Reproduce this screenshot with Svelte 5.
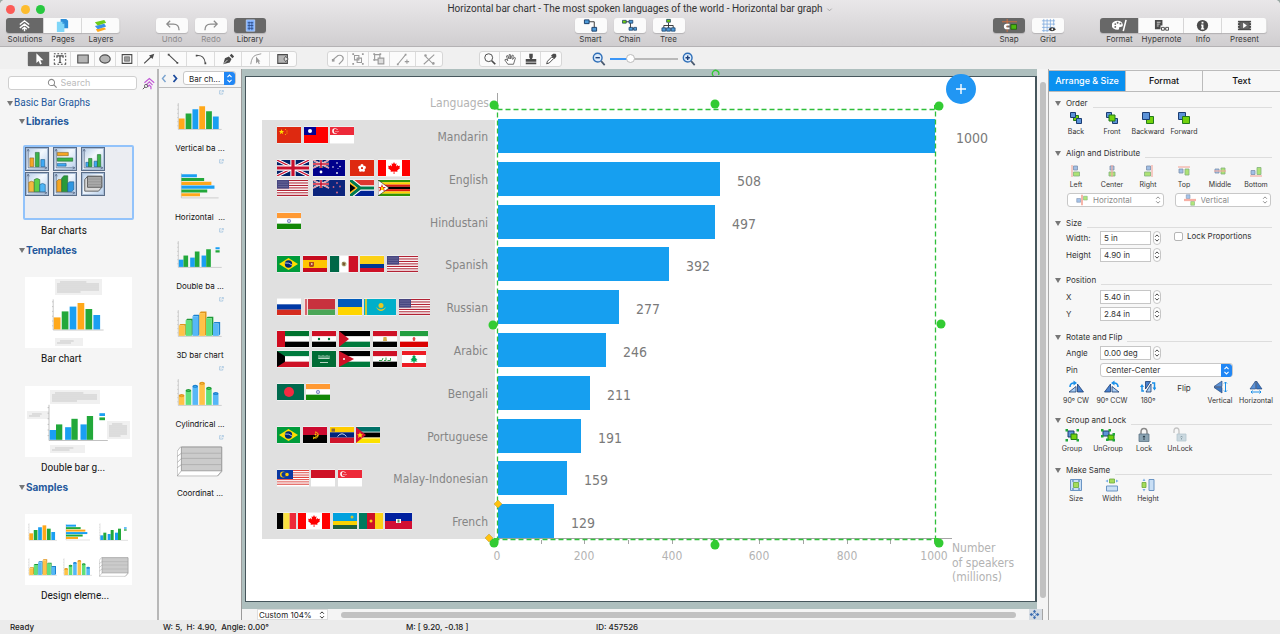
<script lang="ts">
    type Shape = [d: string, fill: string, stroke?: string, width?: number];
    type Chart = Shape[];

    const BLUE = '#1a9ff2';
    const GREEN = '#22a83a';
    const ORANGE = '#ffa81a';

    // chart rows, each flag as [y, code, x]
    const rows = [
        { name: 'Mandarin', value: 1000, flags: [[58, 'cn', 35], [58, 'tw', 62], [58, 'sg', 88]] },
        {
            name: 'English',
            value: 508,
            flags: [
                [91, 'gb', 35], [91, 'au', 71], [91, 'hk', 108], [91, 'ca', 136],
                [111, 'us', 35], [111, 'nz', 71], [111, 'za', 108], [111, 'zw', 136],
            ],
        },
        { name: 'Hindustani', value: 497, flags: [[144, 'in', 35]] },
        { name: 'Spanish', value: 392, flags: [[187, 'br', 35], [187, 'es', 61], [187, 'mx', 88], [187, 'co', 118], [187, 'us', 145]] },
        { name: 'Russian', value: 277, flags: [[230, 'ru', 35], [230, 'by', 62], [230, 'ua', 96], [230, 'kz', 122], [230, 'us', 157]] },
        {
            name: 'Arabic',
            value: 246,
            flags: [
                [262, 'ae', 35], [262, 'sy', 70], [262, 'ps', 97], [262, 'eg', 131], [262, 'ir', 158],
                [282, 'kw', 35], [282, 'sa', 70], [282, 'jo', 97], [282, 'iq', 131], [282, 'lb', 160],
            ],
        },
        { name: 'Bengali', value: 211, flags: [[315, 'bd', 35], [315, 'in', 64]] },
        { name: 'Portuguese', value: 191, flags: [[358, 'br', 35], [358, 'ao', 61], [358, 've', 88], [358, 'mz', 114]] },
        { name: 'Malay-Indonesian', value: 159, flags: [[401, 'my', 35], [401, 'id', 69], [401, 'sg', 96]] },
        { name: 'French', value: 129, flags: [[444, 'be', 35], [444, 'ca', 56], [444, 'rw', 91], [444, 'cm', 117], [444, 'ht', 143]] },
    ] as { name: string; value: number; flags: [number, string, number][] }[];

    // horizontal bands, top to bottom
    function bands(w: number, ...colors: string[]): Shape[] {
        const h = 16 / colors.length;
        return colors.map((c, i) => [`M0 ${i * h}h${w}v${h}h-${w}z`, c]);
    }
    function poles(w: number, ...colors: string[]): Shape[] {
        const s = w / colors.length;
        return colors.map((c, i) => [`M${i * s} 0h${s}v16h-${s}z`, c]);
    }
    function disc(x: number, y: number, r: number): string {
        return `M${x - r} ${y}a${r} ${r} 0 1 0 ${2 * r} 0a${r} ${r} 0 1 0 ${-2 * r} 0z`;
    }
    function union(w: number, h: number): Shape[] {
        return [
            [`M0 0h${w}v${h}h-${w}z`, '#012169'],
            [`M0 0L${w} ${h}M${w} 0L0 ${h}`, 'none', '#fff', h / 5],
            [`M0 0L${w} ${h}M${w} 0L0 ${h}`, 'none', '#c8102e', h / 14],
            [`M${w / 2} 0v${h}M0 ${h / 2}h${w}`, 'none', '#fff', h / 3],
            [`M${w / 2} 0v${h}M0 ${h / 2}h${w}`, 'none', '#c8102e', h / 5],
        ];
    }
    const maple = 'M16 2l1 2 1.5-.7-.4 3.2 1.6-1.500.4 1 2-.2-.8 1.700.9.6-3 2.500.3 1.200-3.100-.4.1 2.600h-.9l.1-2.600-3.100.4.3-1.200-3-2.500.9-.6-.8-1.700 2 .2.4-1 1.600 1.500-.4-3.200 1.400.7z';

    const flags: Record<string, { w: number; art: Shape[] }> = {
        cn: { w: 24, art: [...bands(24, '#de2910'), ['M4.5 2l.7 2h2l-1.600 1.200.6 2-1.700-1.200-1.700 1.200.6-2L1.800 4h2z', '#ffde00'], [disc(8.5, 2.5, 0.6) + disc(10, 4, 0.6) + disc(10, 6, 0.6) + disc(8.5, 7.5, 0.6), '#ffb000']] },
        tw: { w: 24, art: [...bands(24, '#fe0000'), ['M0 0h12v8H0z', '#000095'], [disc(6, 4, 2), '#fff']] },
        sg: { w: 24, art: [...bands(24, '#ed2939', '#fff'), [disc(5, 4, 2.8), '#fff'], [disc(6, 4, 2.3), '#ed2939'], [disc(7, 2.5, 0.5) + disc(6, 4.5, 0.5) + disc(8, 4.5, 0.5), '#fff']] },
        gb: { w: 32, art: union(32, 16) },
        au: { w: 32, art: [...bands(32, '#00008b'), ...union(16, 8), [disc(8, 12, 1.4) + disc(24, 3, 0.8) + disc(20, 7, 0.8) + disc(27, 6.5, 0.8) + disc(24, 13, 0.9) + disc(25, 8.5, 0.5), '#fff']] },
        nz: { w: 32, art: [...bands(32, '#0c247c'), ...union(16, 8), [disc(24, 3, 0.9) + disc(20.5, 7, 0.9) + disc(27, 6.5, 0.9) + disc(24, 12.5, 1.1), '#c76482']] },
        hk: { w: 24, art: [...bands(24, '#de2910'), [disc(12, 5.6, 1.6) + disc(14.3, 7.4, 1.6) + disc(13.4, 10.2, 1.6) + disc(10.6, 10.2, 1.6) + disc(9.7, 7.4, 1.6), '#fff'], [disc(12, 8.2, 0.8), '#de2910']] },
        ca: { w: 32, art: [['M0 0h32v16H0z', '#fff'], ['M0 0h8v16H0zM24 0h8v16h-8z', '#f00'], [maple, '#f00']] },
        us: { w: 31, art: [...bands(31, '#b22234', '#fff', '#b22234', '#fff', '#b22234', '#fff', '#b22234', '#fff', '#b22234', '#fff', '#b22234', '#fff', '#b22234'), ['M0 0h12v8.6H0z', '#474680'], ['M1 2h10M1 4.3h10M1 6.6h10', 'none', '#8886b0', 0.5]] },
        za: { w: 24, art: [...bands(24, '#de3831', '#002395'), ['M0 0L10 8H24M0 16L10 8', 'none', '#fff', 5.4], ['M0 0L10 8H24M0 16L10 8', 'none', '#007a4d', 3.2], ['M0 2l7.5 6L0 14z', '#ffb612'], ['M0 4l5.5 4L0 12z', '#000']] },
        zw: { w: 32, art: [...bands(32, '#319208', '#ffd200', '#de2010', '#000', '#de2010', '#ffd200', '#319208'), ['M0 0l11 8L0 16z', '#fff', '#000', 0.5], ['M4 4l1 3h3l-2 1.5 1 3-3-2-3 2 1-3L0 7h3z', '#de2010'], ['M3 7h2l1 3H3z', '#ffd200']] },
        in: { w: 24, art: [...bands(24, '#ff9933', '#fff', '#138808'), [disc(12, 8, 1.7), '#c8c8ea', '#5560b0', 0.6]] },
        br: { w: 23, art: [...bands(23, '#009b3a'), ['M11.5 2L21 8l-9.5 6L2 8z', '#fedf00'], [disc(11.5, 8, 3.7), '#002776'], ['M8 7q4-.6 7 2', 'none', '#fff', 0.7]] },
        es: { w: 24, art: [['M0 0h24v16H0z', '#c60b1e'], ['M0 4h24v8H0z', '#ffc400'], ['M6 6h5v4l-1 1H7l-1-1z', '#ad4520'], ['M8 7h1.5v2H8z', '#e8c0a0']] },
        mx: { w: 28, art: [...poles(28, '#006847', '#fff', '#ce1126'), [disc(14, 8, 2.5), '#b9bf90'], ['M12.5 6l3 1-1 3-2-1z', '#7b5630']] },
        co: { w: 24, art: [['M0 0h24v8H0z', '#fcd116'], ['M0 8h24v4H0z', '#003893'], ['M0 12h24v4H0z', '#ce1126']] },
        ru: { w: 24, art: bands(24, '#fff', '#0039a6', '#d52b1e') },
        by: { w: 31, art: [['M0 0h31v10.5H0z', '#c8313e'], ['M0 10.5h31V16H0z', '#4aa657'], ['M0 0h4v16H0z', '#f6dcdc'], ['M1 0l2 2-2 2 2 2-2 2 2 2-2 2 2 2-2 2M3 0L1 2l2 2-2 2 2 2-2 2 2 2-2 2 2 2', 'none', '#c8313e', 0.7]] },
        ua: { w: 24, art: bands(24, '#005bbb', '#ffd500') },
        kz: { w: 32, art: [...bands(32, '#00afca'), ['M1 0h2v16H1z', '#c9c637'], [disc(17, 6.5, 2.5), '#e8c820'], ['M12 8q5 5 10 0q-2 4-5 4t-5-4z', '#e8c820']] },
        ae: { w: 32, art: [...bands(32, '#00732f', '#fff', '#000'), ['M0 0h8v16H0z', '#d00c20']] },
        sy: { w: 24, art: [...bands(24, '#ce1126', '#fff', '#000'), [disc(7, 8, 1.2) + disc(17, 8, 1.2), '#007a3d']] },
        ps: { w: 31, art: [...bands(31, '#000', '#fff', '#007a3d'), ['M0 0l10 8L0 16z', '#ce1126']] },
        eg: { w: 24, art: [...bands(24, '#ce1126', '#fff', '#000'), ['M10.5 6h3l.5 4h-4z', '#d6b04a']] },
        ir: { w: 28, art: [...bands(28, '#239f40', '#fff', '#da0000'), ['M14 6l1.6 1.3-.6 2.5h-2l-.6-2.500z', '#e77'], ['M14 6v4', 'none', '#da0000', 0.8]] },
        kw: { w: 32, art: [...bands(32, '#007a3d', '#fff', '#ce1126'), ['M0 0l8 5.3v5.4L0 16z', '#000']] },
        sa: { w: 24, art: [...bands(24, '#006c35'), ['M7 4v4M9 4.5v3M11 4v4M13 4.5v3M15 4v4M17 4.5v3M6.5 7.5h11M8 11.5h8', 'none', '#c9e0d2', 0.9]] },
        jo: { w: 31, art: [...bands(31, '#000', '#fff', '#007a3d'), ['M0 0l15 8L0 16z', '#ce1126'], [disc(5, 8, 1), '#fff']] },
        iq: { w: 24, art: [...bands(24, '#ce1126', '#fff', '#000'), ['M6 9.5h3l1-2.5M11 9.5h2V6.5M14.5 9.5h3V7', 'none', '#36a050', 1]] },
        lb: { w: 24, art: [['M0 0h24v16H0z', '#fff'], ['M0 0h24v4H0zM0 12h24v4H0z', '#ed1c24'], ['M12 4l2 2-1 .5 2.5 2-1.5.5 1.5 1.5h-3V12h-1v-1.5h-3L10 9l-1.500-.5 2.500-2-1-.5z', '#00a651']] },
        bd: { w: 27, art: [...bands(27, '#006a4e'), [disc(12, 8, 5), '#f42a41']] },
        ao: { w: 24, art: [...bands(24, '#cc092f', '#000'), ['M10 10q4 2.5 5-1T12 5M10 12l5-4', 'none', '#ffcb00', 1], [disc(12.5, 7.5, 0.9), '#ffcb00']] },
        ve: { w: 24, art: [...bands(24, '#fc0', '#00247d', '#cf142b'), ['M7.5 9.5q4.5-5.5 9 0', 'none', '#fff', 0.8], ['M1.5 1.5H5v3.2H1.5z', '#8a6a3a']] },
        mz: { w: 24, art: [...bands(24, '#007168', '#000', '#fce100'), ['M0 5h24M0 11h24', 'none', '#fff', 0.7], ['M0 0l10 8L0 16z', '#d21034'], ['M4 5l.9 2.2H7L5.4 8.700l.6 2.300-2-1.400-2 1.400.6-2.300L1 7.200h2.100z', '#fce100']] },
        my: { w: 32, art: [...bands(32, '#e0453e', '#fff', '#e0453e', '#fff', '#e0453e', '#fff', '#e0453e', '#fff', '#e0453e', '#fff', '#e0453e', '#fff', '#e0453e', '#fff'), ['M0 0h16v9H0z', '#0a37a0'], [disc(6, 4.5, 3), '#fc0'], [disc(7, 4.5, 2.5), '#0a37a0'], [disc(10, 4.5, 1.8), '#fc0']] },
        id: { w: 24, art: bands(24, '#ce1126', '#fff') },
        be: { w: 19, art: poles(19, '#000', '#fae042', '#ed2939') },
        rw: { w: 24, art: [['M0 0h24v8H0z', '#00a1de'], ['M0 8h24v4H0z', '#fad201'], ['M0 12h24v4H0z', '#20603d'], [disc(19, 4, 1.5), '#d5c12c']] },
        cm: { w: 24, art: [...poles(24, '#007a5e', '#ce1126', '#fcd116'), [disc(12, 8, 1.5), '#fcd116']] },
        ht: { w: 27, art: [...bands(27, '#00209f', '#d21034'), ['M11 6h5v4h-5z', '#fff'], ['M12.5 6.5h2v3h-2z', '#5a9a60']] },
    };

    // thumbnail charts, drawn on a 44 x 30 board
    const heights = [10, 15, 19, 22, 17, 12];
    const cycle = [ORANGE, GREEN, BLUE];
    const soft = ['#ffc247', '#5fe07a', '#56b7f7'];
    const dark = ['#e0951c', '#1f9a38', '#1b82cf'];
    const axes: Shape = ['M1 2v25.5h42M0 4h1M0 8h1M0 12h1M0 16h1M0 20h1M0 24h1', 'none', '#b5b5b5', 0.6];

    const vertical: Chart = [
        axes,
        ...heights.map((h, i) => [`M${1.5 + i * 6.6} ${27 - h}h5.6v${h}h-5.6z`, cycle[i % 3]] as Shape),
    ];
    const horizontal: Chart = [
        ['M4 3v24h36', 'none', '#b5b5b5', 0.6],
        ...[15, 22, 29, 32, 25, 18].map((w, i) => [`M4 ${4 + i * 3.7}h${w}v3h-${w}z`, [BLUE, GREEN, ORANGE][i % 3]] as Shape),
    ];
    const double: Chart = [
        axes,
        ...[7, 11, 9, 15, 11, 17].map((h, i) => [`M${1.5 + i * 4.5 + Math.floor(i / 2) * 2} ${27 - h}h4.5v${h}h-4.5z`, i % 2 ? GREEN : BLUE] as Shape),
        ['M37 8h4v2h-4z', BLUE],
        ['M37 11h4v2h-4z', GREEN],
    ];
    const solid: Chart = [
        axes,
        ...heights.flatMap((h, i) => {
            const x = 1.5 + i * 6.6;
            const y = 27 - h;
            return [
                [`M${x} ${y}l1.5-1.5h5.5l-1.5 1.5zM${x + 5.5} ${y}l1.5-1.5v${h}l-1.5 1.5z`, dark[i % 3]],
                [`M${x} ${y}h5.5v${h}h-5.5z`, soft[i % 3]],
            ] as Shape[];
        }),
    ];
    const cylinder: Chart = [
        axes,
        ...heights.flatMap((h, i) => {
            const x = 1.5 + i * 6.6;
            const y = 28 - h;
            return [
                [`M${x} ${y}h5.4v${h - 1}h-5.4z`, soft[i % 3]],
                [`M${x} ${y}a2.7 1.5 0 1 0 5.4 0a2.7 1.5 0 1 0-5.4 0z`, dark[i % 3]],
                [`M${x + 1.7} ${y}h2v.6h-2z`, soft[i % 3]],
            ] as Shape[];
        }),
    ];
    const grid: Chart = [
        ['M3 1h40v24l-4 4H0V5z', '#fff', '#9a9a9a', 0.6],
        ['M4 1h39v23H4z', '#cbcbcb', '#8a8a8a', 0.7],
        ['M4 7h39M4 12h39M4 18h39', 'none', '#a2a2a2', 0.6],
        ['M0 10l4-3M0 16l4-4M0 21l4-3M0 29l4-5M43 24l-4 5', 'none', '#8f8f8f', 0.6],
    ];

    const library: [string, Chart][] = [
        ['Vertical ba ...', vertical],
        ['Horizontal  ...', horizontal],
        ['Double ba ...', double],
        ['3D bar chart', solid],
        ['Cylindrical ...', cylinder],
        ['Coordinat ...', grid],
    ];

    // small charts on the tiles of the selected library, 20 x 20
    const tileAxes: Shape = ['M2 1v17h17M1 3l1-2 1 2M17 17l2 1-2 1', 'none', '#5c6f8b', 0.7];
    const tiles: Shape[][] = [
        [tileAxes, ['M3.5 9h3.5v8H3.5z', '#f5a623', '#7b5a1a', 0.5], ['M8.5 4H12v13H8.5z', '#3cb44a', '#17602a', 0.5], ['M13.5 10.5H17V17h-3.5z', '#3fa9f5', '#17507a', 0.5]],
        [tileAxes, ['M3 4h10v3H3z', '#f5a623', '#7b5a1a', 0.5], ['M3 9h14v3H3z', '#3cb44a', '#17602a', 0.5], ['M3 14h8v2.5H3z', '#3fa9f5', '#17507a', 0.5]],
        [tileAxes, ['M3.5 13H6v4H3.5zM11 12h3v5h-3z', '#3fa9f5', '#17507a', 0.5], ['M6 9.500h3V17H6zM14 6h3v11h-3z', '#3cb44a', '#17602a', 0.5]],
        [tileAxes, ['M2.5 8.500q2.5-2 5 0V17h-5z', '#f5b83f', '#8a641a', 0.5], ['M7.5 6q2.500-2 5 0v11h-5z', '#5fd04a', '#17602a', 0.5], ['M12.5 10.5q2.500-2 5 0V17h-5z', '#4fb5f5', '#17507a', 0.5]],
        [tileAxes, ['M2.5 7.500L4 6h3v11H2.500z', '#f5a623', '#7b5a1a', 0.5], ['M7 4.500l2-2h3.500V17H7z', '#2a9a3a', '#17602a', 0.5], ['M12.500 9.500L14 8h4v7l-2 2h-3.500z', '#2f96e0', '#17507a', 0.5]],
        [['M5 3h13v10l-3 3.5H2.500V6z', '#d9d9d9', '#555', 0.8], ['M5 3h13v10H5z', '#a9a9a9', '#555', 0.8], ['M5 5.500h13M5 8h13M5 10.500h13', 'none', '#8a8a8a', 0.5]],
    ];

    // icons on a 16 x 16 board
    const B = '#5c93d8';
    const BS = '#1b3c72';
    const G = '#72d20c';
    const GS = '#237a1c';
    const K = '#4a4a4a';
    const M = '#9b9b9b';
    const icons: Record<string, Shape[]> = {
        solutions: [['M3 7l5-4 5 4M3 10.500l5-4 5 4M5.5 12l2.500-2 2.500 2M8 10.500V14', 'none', '#fff', 1.5]],
        pages: [['M6 1h6l2 2v8H6z', '#2d8fd8'], ['M2 4h6l2 2v9H2z', '#7fd6f8'], ['M8 4l2 2H8z', '#2d8fd8']],
        layers: [['M3 12l9-2 2 2-9 3z', '#ffa81a'], ['M2 8.500L12 6l2 3-9 3z', '#3b8fe8'], ['M2 4.500L12 2l2 3-9 3z', '#6dcc1a']],
        undo: [['M15 13q0-6.5-6-6.5H2M5.5 3L2 6.5 5.5 10', 'none', '#8b8b8b', 1.4]],
        redo: [['M1 13q0-6.5 6-6.5h7M10.5 3L14 6.5 10.5 10', 'none', '#8b8b8b', 1.4]],
        library: [['M3.5 2h9v12h-9z', '#7fb0ff', '#bcd6ff', 0.8], ['M5 5h6M5 8h6M5 11h6M6.5 4v9M9.5 4v9', 'none', '#27457f', 0.8]],
        smart: [['M5 4h7v6', 'none', '#333', 1], ['M1.5 2h5v4h-5zM9.5 10h5v4h-5z', '#4f9bd8', '#173c66', 1]],
        chain: [['M4 4h5v7.500h5', 'none', '#333', 1], ['M0.500 2.500h4v3h-4z', G, '#173c66', 0.8], ['M7.5 2.500h4v3h-4zM7.5 10h4v3h-4zM12.5 10h3v3h-3z', '#4f9bd8', '#173c66', 0.8]],
        tree: [['M8 5v6M3 11V8h10v3', 'none', '#333', 1], ['M6 1.500h4v3H6z', G, '#173c66', 0.8], ['M1 10.500h4V14H1zM6 10.500h4V14H6zM11 10.500h4V14h-4z', '#4f9bd8', '#173c66', 0.8]],
        snap: [['M0 4h16M5.5 1v14', 'none', '#e8703a', 0.8], ['M8 6H5a3 3 0 0 0 0 6h3v-2H5.500a1 1 0 0 1 0-2H8z', '#fff'], ['M9.500 7h6v5h-6z', '#4db80f', '#1b5c08', 0.8]],
        grid: [['M1 3h14M1 6.500h14M1 10h14M1 13.500h8M3 1v14M6.500 1v14M10 1v9M13.500 1v7', 'none', '#7aa7dc', 0.8], ['M8 12q3.500-4.500 8 0q-4.500 4-8 0z', '#333'], [disc(12, 12, 1), '#fff']],
        palette: [['M6 3a6 4.500 0 1 0 0 9.500q2 0 1.500-1.500t1.500-1.500q3 0 2.500-2.500Q10.500 3 6 3z', '#fff'], [disc(3.5, 6.5, 1) + disc(6, 5, 1) + disc(9, 6, 1) + disc(3.5, 9.5, 1), '#666'], ['M12 14l3-12', 'none', '#fff', 1.6]],
        hypernote: [['M1 2h8v6H7v4H1z', K], ['M3 4.500h4M3 6.500h3M3 8.500h2', 'none', '#fff', 0.8], ['M10 11.500h3', 'none', K, 1], ['M8 10h3v3H8zM12.500 10h3v3h-3z', '#fff', K, 1]],
        info: [[disc(8, 8, 6), K], ['M7 4h2v1.800H7zM6.500 7H9v4h.8v1.200H6.300V11H7V8.200h-.5z', '#fff']],
        present: [['M1 3h14v10H1z', K], ['M3.500 4.500h9v7h-9z', '#666'], ['M6.500 5l4 3-4 3z', '#fff'], ['M1 5h1.500M1 8h1.500M1 11h1.500M13.500 5H15M13.500 8H15M13.500 11H15', 'none', '#fff', 0.7]],
        arrow: [['M5 1.500v11l2.600-2.300 1.700 4 1.900-.8-1.700-3.900H13z', '#fff']],
        text: [['M1 2h2M5 2h2M9 2h2M13 2h2M1 14h2M5 14h2M9 14h2M13 14h2M1.500 4v2M1.500 8v2M1.500 12v2M14.500 4v2M14.500 8v2M14.500 12v2', 'none', K, 1.2], ['M4.500 6.500v-2h7v2M8 4.500V12M6.500 12h3', 'none', K, 1.4]],
        rect: [['M2 3.500h12v9H2z', '#b4b4b4', K, 1.2]],
        ellipse: [['M2 8a6 4.700 0 1 0 12 0a6 4.700 0 1 0-12 0z', '#b4b4b4', K, 1.2]],
        frame: [['M2.500 3h11v10h-11z', '#fff', K, 1.2], ['M5 5.500h6v5H5z', '#999', '#777', 1]],
        line: [['M2.500 13L12 4', 'none', K, 1.3], ['M14 2l-2 6-4-4z', K]],
        connector: [['M3 3l10 9.500', 'none', K, 1.2], ['M2 2h2v2H2zM12 11.500h2v2h-2z', K]],
        arc: [['M3 4q9-1 10 9', 'none', K, 1.2], ['M2 3h2v2H2zM12 12h2v2h-2z', K]],
        pen: [['M2.500 14l2-7L9 5l3 3-2 4z', K], ['M10 4l2-2 3 3-2 2z', K], ['M3 13.500L7.500 9', 'none', '#fff', 0.8]],
        node: [['M2 14q1-9 6-10.500L14 2', 'none', M, 1.1], ['M8 5v8l2-1.800 1.200 2.800 1.200-.5-1.200-2.700H13z', M]],
        shape: [['M2 3h11v10H2z', '#b4b4b4', K, 1.2], ['M11 5l3 3-3 3-2-3z', '#ddd', K, 1]],
        g1: [['M2 9l6-5q3-1 5 1t0 5l-4 4', 'none', M, 1.3], ['M1 8h3v3H1z', M]],
        g2: [['M4 4h5v5H4zM7 7h5v5H7z', 'none', M, 1.2], ['M1.500 1.500h2v2h-2zM12.500 1.500h2v2h-2zM1.500 12.500h2v2h-2zM12.500 12.500h2v2h-2z', M]],
        g3: [['M3 3h6v6H3z', 'none', M, 1.3], ['M7 7h6.500v6.500H7z', '#ddd', M, 1.3], ['M1.500 1.500h2v2h-2zM8.500 1.500h2v2h-2zM1.500 8h2v2h-2z', M]],
        g4: [['M2 14l9-11M10 11h5M12.500 8.500v5', 'none', M, 1.2], ['M1 13h2v2H1zM10 2h2v2h-2z', M]],
        g5: [['M2 14L14 3M4 5l9 9', 'none', M, 1.2], [disc(4, 4, 1.5) + disc(13, 13, 1.5), M]],
        search: [[disc(6.5, 6.5, 4.5), 'none', K, 1.1], ['M10 10l4 4', 'none', K, 2]],
        hand: [['M5.500 14L2 9l1.500-.8L5.500 10 4 4.500l1.300-.5L7 8V3h1.400l.4 5L10.500 3.500l1.300.4L11 8.500l2-2.500 1.200.7L12 14z', '#fff', K, 0.9]],
        stamp: [['M6 2h4v4l-1 2h5v3H2V8h5L6 6zM2 12h12v2H2z', K]],
        dropper: [['M3 13.500l1-3 5-5 2 2-5 5z', '#fff', K, 1.1], ['M8 4l4 4 2-2.500V3l-1-1h-2.500z', K]],
        zoomout: [[disc(6.5, 6.5, 5), '#dcebfb', '#2f6fb8', 1.6], ['M4 6.500h5', 'none', '#1c3f7a', 1.6], ['M10.500 10.500L14.500 15', 'none', '#4a5a70', 2]],
        zoomin: [[disc(6.5, 6.5, 5), '#dcebfb', '#2f6fb8', 1.6], ['M4 6.500h5M6.500 4v5', 'none', '#1c3f7a', 1.6], ['M10.500 10.500L14.500 15', 'none', '#4a5a70', 2]],
        find: [[disc(6.5, 6.5, 4.5), 'none', '#8a8a8a', 1.5], ['M10 10l4 4', 'none', '#8a8a8a', 1.8]],
        filter: [['M3 7l6-5 6 5M5 10l4-4 4 4M7 12l2-2 2 2v3', 'none', '#c25bd6', 1.5], [disc(5, 11, 2), 'none', '#555', 1], ['M3.500 12.500L1 15', 'none', '#555', 1.2]],
        back: [['M5.500 5.500h5v5h-5z', G, GS, 1], ['M2.500 2.500h5v5h-5zM8.500 8.500h5v5h-5z', B, BS, 1]],
        front: [['M2.500 2.500h5v5h-5zM8.500 8.500h5v5h-5z', B, BS, 1], ['M5 5h6v6H5z', G, GS, 1]],
        backward: [['M6.500 6.500h7v7h-7z', G, GS, 1], ['M2.500 2.500h7v7h-7z', B, BS, 1]],
        forward: [['M2.500 2.500h7v7h-7z', B, BS, 1], ['M6.500 6.500h7v7h-7z', G, GS, 1]],
        left: [['M5.500 3h4v4h-4z', B, BS, 0.8], ['M5.500 9h6v4h-6z', G, GS, 0.8], ['M4 2v12', 'none', '#f2705c', 1.2]],
        center: [['M6 3h4v4H6z', B, BS, 0.8], ['M5 9h6v4H5z', G, GS, 0.8], ['M8 2v12', 'none', '#f2705c', 1.2]],
        right: [['M6.500 3h4v4h-4z', B, BS, 0.8], ['M4.500 9h6v4h-6z', G, GS, 0.8], ['M12 2v12', 'none', '#f2705c', 1.2]],
        top: [['M3 6h4v4H3z', B, BS, 0.8], ['M9 6h4v6H9z', G, GS, 0.8], ['M2 4h12', 'none', '#f2705c', 1.2]],
        middle: [['M3 6h4v4H3z', B, BS, 0.8], ['M9 5h4v6H9z', G, GS, 0.8], ['M2 8h12', 'none', '#f2705c', 1.2]],
        bottom: [['M3 7.500h4v4H3z', B, BS, 0.8], ['M9 4.500h4v7H9z', G, GS, 0.8], ['M2 13h12', 'none', '#f2705c', 1.2]],
        disth: [['M1 6h5v5H1z', B, BS, 0.8], ['M10 3h5v5h-5z', G, GS, 0.8], ['M8 1v14', 'none', '#f2705c', 2.5]],
        distv: [['M3 1h5v5H3z', B, BS, 0.8], ['M9 10h5v5H9z', G, GS, 0.8], ['M0 8h16', 'none', '#f2705c', 3]],
        cw: [['M9.500 5v8h6z', '#4a82cf', BS, 0.8], ['M8 7.500V13H1z', '#a9cdf2', BS, 0.8], ['M2 8q0-4 4-4', 'none', '#1a8fe8', 1.6], ['M5.500 1.500L9 4 5.500 6.500z', '#1a8fe8']],
        ccw: [['M6.500 5v8h-6z', '#4a82cf', BS, 0.8], ['M8 7.500V13h7z', '#a9cdf2', BS, 0.8], ['M14 8q0-4-4-4', 'none', '#1a8fe8', 1.6], ['M10.500 1.500L7 4l3.500 2.500z', '#1a8fe8']],
        half: [['M5.500 2.500V10l5-7.500z', '#4a82cf', BS, 0.8], ['M11 5v8H6z', '#a9cdf2', BS, 0.8], ['M2 7v5h2M14.500 9V4H12', 'none', '#1a8fe8', 1.5], ['M0 8l2-3 2 3zM12.500 8.500h4l-2 3z', '#1a8fe8']],
        flipv: [['M10 2v5.500H2z', '#5c93d8', BS, 0.6], ['M10 14V8.500H2z', '#3b77c2', BS, 0.6], ['M13.500 3v10M12 4.500L13.500 3 15 4.500M12 11.500l1.500 1.500 1.500-1.500', 'none', '#1a8fe8', 1]],
        fliph: [['M7.500 2v8H2z', '#5c93d8', BS, 0.6], ['M8.500 2v8H14z', '#3b77c2', BS, 0.6], ['M3 13h10M4.500 11.500L3 13l1.500 1.500M11.500 11.500L13 13l-1.500 1.500', 'none', '#1a8fe8', 1]],
        group: [['M4 4h6v6H4z', B, BS, 1], ['M7 7h6v5.500H7z', G, GS, 1], ['M1.500 2h2.500v2.500H1.500zM12.500 2H15v2.500h-2.500zM1.500 12H4v2.500H1.500zM12.500 12H15v2.500h-2.500z', '#1fa83a']],
        ungroup: [['M3 4h6v5H3z', B, BS, 1], ['M8 8h6v5H8z', G, GS, 1], ['M1 2h2.500v2.500H1zM8.500 2H11v2.500H8.500zM1 8h2.500v2.500H1zM12.500 6H15v2.500h-2.500zM6 11.500h2.500V14H6zM12.500 12H15v2.500h-2.500z', '#1fa83a']],
        lock: [['M5 7V5q0-3.500 3-3.500T11 5v2', 'none', '#8a8a8a', 1.5], ['M3 7h10v7.500H3z', '#8aa3b2', '#5d7585', 0.8], [disc(8, 10, 1.2) + 'M7.500 10h1v3h-1z', '#2c3e4a']],
        unlock: [['M2 6V4q0-3 2.500-3T7 4v3', 'none', '#c4c4c4', 1.3], ['M5 7h9v7H5z', '#cbd9e0', '#b5c6cf', 0.8], [disc(9.5, 10, 1) + 'M9 10h1v2.500H9z', '#8ba0aa']],
        samesize: [['M2.500 2.500h11v11h-11z', '#c9dff5', '#6b95c4', 1], ['M5.500 5.500h5v5h-5z', '#a5dc5a', '#6aa83a', 0.8], ['M4 4h2M10 4h2M4 12h2M10 12h2', 'none', '#3f74b5', 1.2]],
        samewidth: [['M2.500 9h11v5h-11z', '#c9dff5', '#6b95c4', 1], ['M5.500 2h5v4h-5z', '#a5dc5a', '#6aa83a', 0.8], ['M1.500 4L4 2.500v3zM14.500 4L12 2.500v3z', '#78aee6']],
        sameheight: [['M9 2.500h5v11H9z', '#c9dff5', '#6b95c4', 1], ['M2 5.500h4v5H2z', '#a5dc5a', '#6aa83a', 0.8], ['M4 1.500L5.500 4h-3zM4 14.500L5.500 12h-3z', '#78aee6']],
        link: [['M6 2H2v11h10V9', 'none', '#8fb8dc', 2], ['M7 8l6-6M8.500 2H14v5', 'none', '#8fb8dc', 2]],
        navigate: [['M8 2v12M2 8h12M6 4l2-2 2 2M6 12l2 2 2-2M4 6L2 8l2 2M12 6l2 2-2 2', 'none', '#3c6db0', 1.5], [disc(8, 8, 2.5), '#dfe8f3', '#3c6db0', 1]],
        updown: [['M5 6l3-3 3 3M5 10l3 3 3-3', 'none', 'currentColor', 1.5]],
        chevron: [['M3 6l5 5 5-5', 'none', '#8a8a8a', 1.5]],
    };

    const tools = [
        { id: 'arrow', name: 'Select', w: 22 }, { id: 'text', name: 'Text', w: 21 }, { id: 'rect', name: 'Rectangle', w: 24 },
        { id: 'ellipse', name: 'Ellipse', w: 21 }, { id: 'frame', name: 'Text box', w: 22 }, { id: 'line', name: 'Line', w: 22 },
        { id: 'connector', name: 'Connector', w: 27 }, { id: 'arc', name: 'Arc', w: 28 }, { id: 'pen', name: 'Pen', w: 27 },
        { id: 'node', name: 'Edit points', w: 28 }, { id: 'shape', name: 'Edit shape', w: 26 },
    ];
    const edits = [
        { id: 'g1', name: 'Reshape', w: 20 }, { id: 'g2', name: 'Group', w: 21 }, { id: 'g3', name: 'Ungroup', w: 21 },
        { id: 'g4', name: 'Add point', w: 26 }, { id: 'g5', name: 'Split', w: 26 },
    ];
    const views = [
        { id: 'search', name: 'Zoom', w: 20 }, { id: 'hand', name: 'Pan', w: 21 }, { id: 'stamp', name: 'Stamp', w: 20 },
        { id: 'dropper', name: 'Eyedropper', w: 20 },
    ];

    // centre of each handle, then the corner square that makes its tip
    const handles = [
        [252, 36, 252, 36], [473, 35, 471, 33], [697, 37, 692, 36], [251, 256, 249, 254],
        [699, 255, 697, 253], [252, 474, 252, 469], [473, 476, 471, 471], [697, 474, 692, 469],
    ];

    let tab = $state('Arrange & Size');
    let tool = $state('arrow');
    let zoom = $state(27);
</script>

{#snippet shapes(list: Shape[])}
    {#each list as [d, fill, stroke, width]}
        <path {d} {fill} stroke={stroke ?? 'none'} stroke-width={width ?? 1} />
    {/each}
{/snippet}

{#snippet icon(name: string, size = 16)}
    <svg width={size} height={size} viewBox="0 0 16 16" aria-hidden="true">{@render shapes(icons[name])}</svg>
{/snippet}

{#snippet chart(c: Chart, w = 44, h = 30)}
    <svg width={w} height={h} viewBox="0 0 44 30" aria-hidden="true">{@render shapes(c)}</svg>
{/snippet}

{#snippet big(name: string, label: string, w: number, kind = '')}
    <div class="item {kind}" style:width="{w}px">
        <button aria-label={label}>{@render icon(name, 15)}</button>
        <span>{label}</span>
    </div>
{/snippet}

{#snippet strip(list: { id: string; name: string; w: number }[])}
    <div class="strip">
        {#each list as t}
            <button class:on={tool === t.id} style:width="{t.w}px" aria-label={t.name} onclick={() => (tool = t.id)}>
                {@render icon(t.id, 14)}
            </button>
        {/each}
    </div>
{/snippet}

{#snippet action(name: string, label: string)}
    <button class="action">{@render icon(name)}<span>{label}</span></button>
{/snippet}

{#snippet field(id: string, label: string, value: string)}
    <div class="field">
        <label for={id}>{label}</label>
        <input {id} type="text" {value} />
        <button class="step" aria-label="Change {label}">{@render icon('updown', 10)}</button>
    </div>
{/snippet}

{#snippet note(x: number, y: number, w: number, lines: number)}
    <rect {x} {y} width={w} height={lines * 2 + 4} fill="#f0f0f0" />
    {#each Array(lines) as _, i}
        <path d="M{x + (i ? 2 : 5)} {y + 3 + i * 2}h{w - (i === lines - 1 ? w / 2 : i ? 5 : w / 3 + 5)}" stroke="#b9b9b9" stroke-width="0.7" />
    {/each}
{/snippet}

<div class="window">
    <header>
        <div class="title">
            <div class="lights"><i class="red"></i><i class="yellow"></i><i class="green"></i></div>
            <h1>Horizontal bar chart - The most spoken languages of the world - Horizontal bar graph {@render icon('chevron', 7)}</h1>
        </div>
        <div class="toolbar">
            <div class="cluster">
                <div class="joined">
                    {@render big('solutions', 'Solutions', 38, 'dark')}
                    {@render big('pages', 'Pages', 38)}
                    {@render big('layers', 'Layers', 38)}
                </div>
                <div class="loose">
                    {@render big('undo', 'Undo', 32, 'dim')}
                    {@render big('redo', 'Redo', 32, 'dim')}
                    {@render big('library', 'Library', 32, 'dark')}
                </div>
            </div>
            <div class="loose">
                {@render big('smart', 'Smart', 32)}
                {@render big('chain', 'Chain', 32)}
                {@render big('tree', 'Tree', 32)}
            </div>
            <div class="cluster">
                <div class="loose">
                    {@render big('snap', 'Snap', 32, 'dark')}
                    {@render big('grid', 'Grid', 32)}
                </div>
                <div class="joined">
                    {@render big('palette', 'Format', 39, 'dark')}
                    {@render big('hypernote', 'Hypernote', 45)}
                    {@render big('info', 'Info', 38)}
                    {@render big('present', 'Present', 45)}
                </div>
            </div>
        </div>
    </header>

    <div class="tools">
        {@render strip(tools)}
        {@render strip(edits)}
        {@render strip(views)}
        <div class="zoom">
            {@render icon('zoomout', 14)}
            <input type="range" min="0" max="100" bind:value={zoom} aria-label="Zoom level" style:--fill="{zoom}%" />
            {@render icon('zoomin', 14)}
        </div>
    </div>

    <main>
        <aside class="solutions">
            <div class="search">
                <label>
                    {@render icon('find', 11)}
                    <input type="text" placeholder="Search" aria-label="Search" />
                </label>
                {@render icon('filter', 13)}
            </div>
            <h2>Basic Bar Graphs</h2>
            <h3>Libraries</h3>
            <div class="thumb picked">
                {#each tiles as t}
                    <svg class="tile" width="24" height="24" viewBox="0 0 20 20">{@render shapes(t)}</svg>
                {/each}
            </div>
            <p>Bar charts</p>
            <h3>Templates</h3>
            <svg class="thumb" viewBox="0 0 107 71">
                <rect width="107" height="71" fill="#fff" />
                {@render note(30, 2, 47, 6)}
                <svg x="27" y="20" width="60" height="36" viewBox="0 0 50 30">{@render shapes(vertical)}</svg>
                {@render note(30, 61, 28, 2)}
            </svg>
            <p>Bar chart</p>
            <svg class="thumb" viewBox="0 0 107 71">
                <rect width="107" height="71" fill="#fff" />
                {@render note(25, 4, 50, 5)}
                {@render note(2, 25, 22, 2)}
                <svg x="22" y="16" width="74" height="42" viewBox="0 0 52 30">{@render shapes(double)}</svg>
                {@render note(82, 35, 23, 7)}
                {@render note(25, 59, 35, 2)}
            </svg>
            <p>Double bar g...</p>
            <h3>Samples</h3>
            <div class="thumb samples">
                {#each library as [, c]}
                    {@render chart(c, 30, 20)}
                {/each}
            </div>
            <p>Design eleme...</p>
        </aside>

        <aside class="library">
            <div class="libhead">
                <button aria-label="Previous library"><svg width="6" height="9" viewBox="0 0 6 9"><path d="M4.500 1L1.500 4.500l3 3.500" fill="none" stroke="#7aa3cf" stroke-width="1.400" /></svg></button>
                <button aria-label="Next library"><svg width="6" height="9" viewBox="0 0 6 9"><path d="M1.500 1l3 3.500-3 3.500" fill="none" stroke="#1c4a9c" stroke-width="1.800" /></svg></button>
                <div class="pick short">
                    <select aria-label="Library"><option>Bar ch...</option></select>
                    <span class="knob">{@render icon('updown', 11)}</span>
                </div>
            </div>
            {#each library as [name, c]}
                <figure>
                    <span class="link">{@render icon('link', 5)}</span>
                    {@render chart(c, 46, 31)}
                    <figcaption>{name}</figcaption>
                </figure>
            {/each}
        </aside>

        <section class="editor">
            <div class="canvas">
                <svg viewBox="0 0 795 540">
                    <rect x="3" y="7" width="792" height="526" fill="#46565c" />
                    <rect x="4" y="8" width="789" height="524" fill="#fff" />
                    <rect x="20" y="51" width="233" height="419" fill="#e0e0e0" />
                    <path d="M255.500 24v446M252 469.500h458" stroke="#a5a5a5" />
                    {#each Array(11) as _, i}
                        <path d="M{Math.round(255 + i * 43.7) + 0.5} 470v5" stroke="#a5a5a5" />
                    {/each}
                    <text class="axis" x="247" y="38" text-anchor="end">Languages</text>
                    {#each rows as row, i}
                        {@const y = Math.round(50 + i * 42.8)}
                        {@const end = 256 + Math.round(row.value * 0.437)}
                        <text class="name" x="246" y={y + 22} text-anchor="end">{row.name}</text>
                        <rect x="256" {y} width={end - 256} height="34" fill="#169ff0" />
                        <text class="value" x={row.value === 1000 ? end + 21 : end + 17} y={y + 24}>{row.value}</text>
                        {#each row.flags as [fy, code, fx]}
                            <rect x={fx} y={fy - 1} width={flags[code].w} height="18" fill="#eee" />
                            <svg x={fx} y={fy} width={flags[code].w} height="16" viewBox="0 0 {flags[code].w} 16">
                                {@render shapes(flags[code].art)}
                            </svg>
                        {/each}
                    {/each}
                    {#each [0, 200, 400, 600, 800, 1000] as n}
                        <text class="axis" x={Math.round(n * 0.437) + 255} y="491" text-anchor="middle">{n}</text>
                    {/each}
                    <text class="axis" x="710" y="483">Number</text>
                    <text class="axis" x="710" y="498">of speakers</text>
                    <text class="axis" x="710" y="512">(millions)</text>
                    <rect x="255.500" y="40.500" width="438" height="430" fill="none" stroke="#fff" />
                    <rect x="255.500" y="40.500" width="438" height="430" fill="none" stroke="#2fbf3a" stroke-width="1.300" stroke-dasharray="5 3" />
                    {#each handles as [cx, cy, sx, sy]}
                        <circle {cx} {cy} r="4.500" fill="#33cb33" />
                        <rect x={sx} y={sy} width="4.500" height="4.500" fill="#33cb33" />
                    {/each}
                    <path d="M471.500 7a3.200 3.200 0 1 1 5-1" fill="none" stroke="#33cb33" stroke-width="1.300" />
                    <path d="M256 431l4 4-4 4-4-4zM247 465l4 4-4 4-4-4z" fill="#ffc20e" stroke="#b99a3a" stroke-width="0.500" />
                </svg>
                <button class="add" aria-label="Add"><svg width="14" height="14" viewBox="0 0 14 14"><path d="M7 2v10M2 7h10" stroke="#fff" stroke-width="1.400" /></svg></button>
            </div>
            <div class="vscroll"><i></i></div>
            <div class="hscroll">
                <div class="scale">
                    <select aria-label="Scale"><option>Custom 104%</option></select>
                    {@render icon('updown', 10)}
                </div>
                <i></i>
                <span class="nav">{@render icon('navigate', 11)}</span>
            </div>
        </section>

        <aside class="inspector">
            <nav>
                {#each ['Arrange & Size', 'Format', 'Text'] as t}
                    <button class:on={tab === t} onclick={() => (tab = t)}>{t}</button>
                {/each}
            </nav>

            <section class="order">
                <h4>Order</h4>
                <div class="actions">
                    {@render action('back', 'Back')}
                    {@render action('front', 'Front')}
                    {@render action('backward', 'Backward')}
                    {@render action('forward', 'Forward')}
                </div>
            </section>

            <section class="align">
                <h4>Align and Distribute</h4>
                <div class="actions faded">
                    {@render action('left', 'Left')}
                    {@render action('center', 'Center')}
                    {@render action('right', 'Right')}
                    {@render action('top', 'Top')}
                    {@render action('middle', 'Middle')}
                    {@render action('bottom', 'Bottom')}
                </div>
                <div class="pair">
                    <div class="pick faint">
                        <select aria-label="Distribute horizontally"><option>Horizontal</option></select>
                        <span class="lead">{@render icon('disth', 12)}</span>
                        <span class="ends">{@render icon('updown', 10)}</span>
                    </div>
                    <div class="pick faint">
                        <select aria-label="Distribute vertically"><option>Vertical</option></select>
                        <span class="lead">{@render icon('distv', 12)}</span>
                        <span class="ends">{@render icon('updown', 10)}</span>
                    </div>
                </div>
            </section>

            <section class="size">
                <h4>Size</h4>
                <div class="split">
                    <div>
                        {@render field('width', 'Width:', '5 in')}
                        {@render field('height', 'Height', '4.90 in')}
                    </div>
                    <label class="check"><input type="checkbox" /> Lock Proportions</label>
                </div>
            </section>

            <section class="position">
                <h4>Position</h4>
                {@render field('x', 'X', '5.40 in')}
                {@render field('y', 'Y', '2.84 in')}
            </section>

            <section class="rotate">
                <h4>Rotate and Flip</h4>
                {@render field('angle', 'Angle', '0.00 deg')}
                <div class="field">
                    <label for="pin">Pin</label>
                    <div class="pick wide">
                        <select id="pin"><option>Center-Center</option></select>
                        <span class="knob">{@render icon('updown', 11)}</span>
                    </div>
                </div>
                <div class="actions">
                    {@render action('cw', '90º CW')}
                    {@render action('ccw', '90º CCW')}
                    {@render action('half', '180º')}
                    <span class="flip">Flip</span>
                    {@render action('flipv', 'Vertical')}
                    {@render action('fliph', 'Horizontal')}
                </div>
            </section>

            <section class="order group">
                <h4>Group and Lock</h4>
                <div class="actions">
                    {@render action('group', 'Group')}
                    {@render action('ungroup', 'UnGroup')}
                    {@render action('lock', 'Lock')}
                    {@render action('unlock', 'UnLock')}
                </div>
            </section>

            <section class="order">
                <h4>Make Same</h4>
                <div class="actions">
                    {@render action('samesize', 'Size')}
                    {@render action('samewidth', 'Width')}
                    {@render action('sameheight', 'Height')}
                </div>
            </section>
        </aside>
    </main>

    <footer>
        <span>Ready</span>
        <span>W: 5,&nbsp; H: 4.90,&nbsp; Angle: 0.00°</span>
        <span>M: [ 9.20, -0.18 ]</span>
        <span>ID: 457526</span>
    </footer>
</div>

<style>
    :global(body) {
        margin: 0;
        background: #9aa8a4;
    }
    .window {
        display: flex;
        flex-direction: column;
        min-height: 100vh;
        font: 8px/12px Inter, "Liberation Sans", sans-serif;
        color: #222;
        background: #f6f6f6;
        border-radius: 5px 5px 0 0;
        overflow: hidden;
    }
    .window * {
        box-sizing: border-box;
    }
    button,
    input,
    select {
        font: inherit;
        color: inherit;
        margin: 0;
        padding: 0;
        border: 0;
        background: none;
    }
    svg {
        display: block;
        flex: none;
    }
    h1, h2, h3, h4, p, figure {
        margin: 0;
    }

    /* title bar */
    header {
        height: 47px;
        background: linear-gradient(#e9e7e9, #d0ced0);
        border-bottom: 1px solid #b4b2b4;
    }
    .title {
        display: grid;
        grid-template-columns: 1fr auto 1fr;
        height: 18px;
        align-items: center;
    }
    .lights {
        display: flex;
        gap: 6px;
        padding-left: 6px;
    }
    .lights i {
        width: 9px;
        height: 9px;
        border-radius: 50%;
    }
    .red {
        background: #fc5b57;
    }
    .yellow {
        background: #fdbc2e;
    }
    .green {
        background: #28c840;
    }
    h1 {
        display: flex;
        align-items: center;
        gap: 3px;
        font: 10px/16px Roboto, sans-serif;
        color: #333;
    }
    .toolbar {
        display: flex;
        justify-content: space-between;
        padding: 0 13px 0 6px;
    }
    .cluster {
        display: flex;
        gap: 36px;
    }
    .joined,
    .loose {
        display: flex;
    }
    .loose {
        gap: 7px;
    }
    .item {
        display: flex;
        flex-direction: column;
        align-items: center;
        color: #3a3a3a;
    }
    .item button {
        display: flex;
        align-items: center;
        justify-content: center;
        width: 100%;
        height: 15px;
        background: #fbfbfb;
        border-radius: 3px;
        box-shadow: 0 1px 1px #b5b3b5;
    }
    .item.dark button {
        background: #686868;
    }
    .item.dim {
        color: #8d8b8d;
    }
    .item span {
        white-space: nowrap;
    }
    .joined .item button {
        border-radius: 0;
        border-right: 1px solid #ddd;
    }
    .joined .item:first-child button {
        border-radius: 3px 0 0 3px;
    }
    .joined .item:last-child button {
        border-radius: 0 3px 3px 0;
    }

    /* drawing tools */
    .tools {
        display: flex;
        align-items: center;
        height: 22px;
        padding: 1px 0 0 27px;
        background: #f0f0f0;
    }
    .strip {
        display: flex;
        height: 16px;
        margin-right: 30px;
        background: #fbfbfb;
        border: 1px solid #d6d6d6;
        border-radius: 3px;
    }
    .strip:nth-child(2) {
        margin-right: 36px;
    }
    .strip button {
        display: flex;
        align-items: center;
        justify-content: center;
        border-right: 1px solid #dcdcdc;
    }
    .strip button:last-child {
        border-right: 0;
    }
    .strip button.on {
        background: #676767;
    }
    .zoom {
        display: flex;
        align-items: center;
        gap: 4px;
    }
    .zoom input {
        appearance: none;
        width: 68px;
        height: 12px;
    }
    .zoom input::-webkit-slider-runnable-track {
        height: 2px;
        background: linear-gradient(90deg, #3b96f7 var(--fill), #b9b9b9 var(--fill));
    }
    .zoom input::-webkit-slider-thumb {
        appearance: none;
        width: 9px;
        height: 9px;
        margin-top: -4px;
        border-radius: 50%;
        background: #fff;
        border: 1px solid #bbb;
    }

    main {
        flex: 1;
        display: grid;
        grid-template-columns: 159px 83px minmax(0, 1fr) 232px;
    }

    /* solutions column */
    .solutions {
        border-right: 2px solid #b8b8b8;
        background: #f5f5f5;
    }
    .search {
        display: flex;
        align-items: center;
        gap: 5px;
        padding: 7px 2px 6px 8px;
    }
    .search label {
        display: flex;
        flex: 1;
        align-items: center;
        justify-content: center;
        gap: 3px;
        height: 14px;
        background: #fff;
        border: 1px solid #cfcfcf;
        border-radius: 3px;
    }
    .search input {
        width: 38px;
        font-size: 9px;
        outline: none;
    }
    .search input::placeholder {
        color: #bbb;
    }
    h2,
    h3 {
        display: flex;
        align-items: center;
        gap: 1px;
        font: 10px/14px Inter, sans-serif;
        color: #24589c;
    }
    h2::before,
    h3::before,
    h4::before {
        content: '';
        flex: none;
        border: 3px solid transparent;
        border-top: 5px solid #777;
        border-bottom: 0;
    }
    h2 {
        padding-left: 7px;
        margin-bottom: 4px;
        font-family: Roboto, sans-serif;
    }
    h3 {
        padding-left: 19px;
        font-weight: 700;
    }
    .thumb {
        display: block;
        width: 107px;
        height: 71px;
        margin: 20px 0 0 25px;
    }
    .picked {
        display: grid;
        grid-template-columns: repeat(3, 24px);
        grid-template-rows: 24px 24px;
        gap: 1px 4px;
        width: 111px;
        height: 75px;
        margin: 17px 0 0 23px;
        background: #ebedf2;
        border: 2px solid #92c3fb;
        border-radius: 2px;
    }
    .tile {
        background: linear-gradient(135deg, #b4cbe6, #f3f8fd 45%, #b5cdea);
        border: 1px solid #5a6d88;
        box-shadow: inset 0 0 0 1px #a9bdd6;
    }
    .samples {
        display: grid;
        grid-template-columns: repeat(3, 1fr);
        align-items: center;
        justify-items: center;
        background: #fff;
    }
    .solutions p {
        margin: 4px 0 0 41px;
        font: 10px/14px Roboto, sans-serif;
        color: #111;
    }
    .solutions p + h3 {
        margin-top: 5px;
    }

    /* library column */
    .library {
        background: #f5f5f5;
        border-right: 1px solid #9a9a9a;
    }
    .libhead {
        display: flex;
        align-items: center;
        gap: 5px;
        height: 19px;
        padding: 0 5px 0 2px;
        border-bottom: 1px solid #bdbdbd;
    }
    .pick {
        display: grid;
        align-items: center;
        height: 14px;
        background: #fff;
        border: 1px solid #c8c8c8;
        border-radius: 3px;
    }
    .pick > * {
        grid-area: 1 / 1;
    }
    .pick select {
        appearance: none;
        padding-left: 5px;
        width: 100%;
    }
    .short {
        flex: 1;
    }
    .knob {
        justify-self: end;
        padding: 1px 0;
        background: #2187f5;
        border-radius: 0 3px 3px 0;
        color: #fff;
        pointer-events: none;
    }
    figure {
        display: flex;
        flex-direction: column;
        align-items: center;
        height: 69px;
        padding-top: 2px;
    }
    .link {
        align-self: flex-end;
        margin: 0 17px 6px 0;
    }
    figcaption {
        margin-top: 10px;
        color: #111;
        white-space: pre;
    }

    /* drawing */
    .editor {
        display: grid;
        grid-template-columns: minmax(0, 1fr) 11px;
        grid-template-rows: 1fr 11px;
        background: #f4f4f4;
    }
    .canvas {
        position: relative;
        background: #aebfbe;
    }
    .canvas > svg {
        width: 100%;
        height: auto;
    }
    .canvas text {
        font: 12px "DejaVu Sans Condensed", "DejaVu Sans", sans-serif;
    }
    .canvas .axis {
        fill: #b3b3b3;
    }
    .canvas .name {
        fill: #858585;
    }
    .canvas .value {
        font-size: 14px;
        fill: #7a7a7a;
    }
    .add {
        position: absolute;
        top: 5px;
        right: 61px;
        display: flex;
        align-items: center;
        justify-content: center;
        width: 30px;
        height: 30px;
        border-radius: 50%;
        background: #2196f3;
    }
    .vscroll {
        display: flex;
        justify-content: center;
        padding: 13px 0 11px;
    }
    .vscroll i {
        width: 6px;
        border-radius: 3px;
        background: #c1c1c1;
    }
    .hscroll {
        grid-column: 1 / -1;
        display: flex;
        align-items: center;
        gap: 13px;
        padding: 0 5px 0 15px;
    }
    .hscroll i {
        flex: 1;
        height: 6px;
        border-radius: 3px;
        background: #c1c1c1;
    }
    .nav {
        padding-right: 2px;
        background: #d5dbe2;
        border-right: 1px solid #a5a5a5;
    }
    .scale {
        display: flex;
        align-items: center;
        width: 71px;
        height: 11px;
        background: #fff;
        border: 1px solid #ddd;
    }
    .scale select {
        appearance: none;
        flex: 1;
        padding-left: 1px;
    }

    /* inspector */
    .inspector {
        background: #f7f7f7;
        border-left: 1px solid #a9a9a9;
        padding-top: 1px;
        color: #333;
    }
    nav {
        display: grid;
        grid-template-columns: repeat(3, 1fr);
        height: 22px;
        margin-bottom: 5px;
        border-top: 1px solid #bbb;
        border-bottom: 1px solid #bbb;
    }
    nav button {
        border-right: 1px solid #bbb;
        font-size: 9px;
        font-weight: 500;
        color: #111;
    }
    nav button:last-child {
        border-right: 0;
    }
    nav .on {
        background: #0a91f0;
        color: #fff;
    }
    h4 {
        display: flex;
        align-items: center;
        gap: 5px;
        padding: 0 8px 0 6px;
        font: 8px/12px Inter, sans-serif;
    }
    h4::after {
        content: '';
        flex: 1;
        height: 1px;
        margin-top: 8px;
        background: #ddd;
    }
    .actions {
        display: grid;
        grid-template-columns: repeat(6, 1fr);
        padding: 1px 6px 0 9px;
    }
    .action {
        display: flex;
        flex-direction: column;
        align-items: center;
        font-size: 7px;
        line-height: 12px;
        white-space: nowrap;
    }
    .order {
        padding-bottom: 9px;
    }
    .group .actions {
        padding: 1px 10px 0 5px;
    }
    .align {
        padding-bottom: 10px;
    }
    .align .action {
        padding-top: 3px;
    }
    .faded svg {
        opacity: 0.55;
    }
    .pair {
        display: grid;
        grid-template-columns: 1fr 1fr;
        gap: 11px;
        padding: 2px 9px 0 18px;
    }
    .faint {
        color: #8a8a8a;
    }
    .faint select {
        padding-left: 25px;
    }
    .lead {
        padding-left: 8px;
        opacity: 0.55;
        pointer-events: none;
    }
    .ends {
        justify-self: end;
        pointer-events: none;
    }
    .field {
        display: grid;
        grid-template-columns: 34px 51px 10px;
        align-items: center;
        height: 17px;
        padding-left: 17px;
    }
    .field input {
        height: 14px;
        padding-left: 3px;
        background: #fff;
        border: 1px solid #c6c6c6;
    }
    .step {
        display: flex;
        align-items: center;
        justify-content: center;
        width: 8px;
        height: 14px;
        margin-left: 2px;
        background: #fff;
        border: 1px solid #c6c6c6;
        border-radius: 4px;
    }
    .wide {
        grid-column: 2 / 3;
        width: 133px;
    }
    .split {
        display: flex;
        gap: 13px;
    }
    .check {
        display: flex;
        align-items: center;
        gap: 4px;
        height: 14px;
    }
    .check input {
        appearance: none;
        width: 9px;
        height: 9px;
        background: #fff;
        border: 1px solid #b5b5b5;
        border-radius: 2px;
    }
    .size {
        padding-bottom: 11px;
    }
    .position h4 {
        margin-bottom: 2px;
    }
    .position {
        padding-bottom: 9px;
    }
    .rotate {
        padding-bottom: 7px;
    }
    .rotate h4 {
        margin-bottom: 1px;
    }
    .flip {
        text-align: center;
        padding-top: 3px;
    }

    footer {
        display: grid;
        grid-template-columns: 153px 243px 190px 1fr;
        height: 14px;
        padding-left: 10px;
        background: #ebebeb;
        line-height: 14px;
        font-weight: 500;
    }
</style>
